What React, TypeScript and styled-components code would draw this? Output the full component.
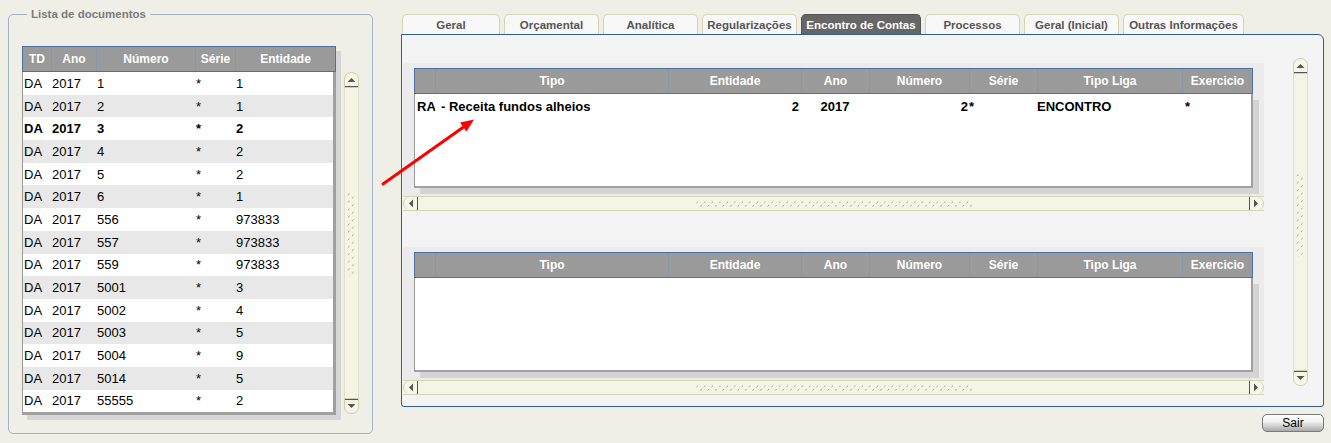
import React, { useId } from 'react';
import styled, { createGlobalStyle } from 'styled-components';

const Global = createGlobalStyle`
  html, body { margin: 0; padding: 0; background: #efefe8; }
  body { font-family: "Liberation Sans", Arial, sans-serif; }
  #root { width: 1331px; height: 443px; }
`;

const Page = styled.div`
  position: relative;
  display: flex;
  align-items: flex-start;
  width: 1331px;
  height: 443px;
  box-sizing: border-box;
  padding-left: 8px;
  overflow: hidden;
`;

/* ---------- left fieldset ---------- */
const Fieldset = styled.section`
  position: relative;
  flex: none;
  box-sizing: border-box;
  width: 365px;
  height: 420px;
  margin-top: 14px;
  border: 1px solid #a3b3c6;
  border-radius: 5px;
  padding: 31px 0 0 13px;
  display: flex;
  align-items: flex-start;
  gap: 8px;
`;

const Legend = styled.span`
  position: absolute;
  top: -8px;
  left: 18px;
  padding: 0 4px;
  background: #efefe8;
  color: #7c7c7c;
  font-size: 11.5px;
  font-weight: bold;
  line-height: 14px;
`;

/* ---------- grid ---------- */
const GridFrame = styled.div<{ $w: number; $shadow?: boolean }>`
  flex: none;
  width: ${p => p.$w}px;
  box-shadow: ${p => (p.$shadow ? '5px 5px 0 #d6d6d6' : 'none')};
`;

const HeaderRow = styled.div<{ $cols: string }>`
  display: grid;
  grid-template-columns: ${p => p.$cols};
  box-sizing: border-box;
  height: 26px;
  background: #9a9a9a;
  border: 1px solid #4d719e;
`;

const HeaderCell = styled.div`
  display: flex;
  align-items: center;
  justify-content: center;
  color: #ffffff;
  font-weight: bold;
  font-size: 12px;
  white-space: nowrap;
  overflow: hidden;
  border-left: 1px solid #8796ad;
  &:first-child { border-left: none; }
`;

const Body = styled.div<{ $h: number; $shadow?: boolean; $edge: number }>`
  box-sizing: border-box;
  height: ${p => p.$h}px;
  background: #ffffff;
  border-left: 1px solid #9a9a9a;
  border-right: ${p => p.$edge}px solid #a0a0a0;
  border-bottom: ${p => p.$edge}px solid #a0a0a0;
  box-shadow: ${p => (p.$shadow ? '6px 6px 0 #d4d4d4' : 'none')};
  overflow: hidden;
`;

const Row = styled.div<{ $cols: string; $h: number; $alt?: boolean; $bold?: boolean }>`
  display: grid;
  grid-template-columns: ${p => p.$cols};
  height: ${p => p.$h}px;
  align-items: center;
  background: ${p => (p.$alt ? '#e8e8e8' : 'transparent')};
  font-weight: ${p => (p.$bold ? 'bold' : 'normal')};
  font-size: 13px;
  color: #000;
`;

const Cell = styled.div<{ $align?: 'left' | 'right' | 'center'; $pad?: string }>`
  text-align: ${p => p.$align || 'left'};
  padding: ${p => p.$pad || '0 0 0 1px'};
  white-space: nowrap;
  overflow: hidden;
`;

/* ---------- scrollbars ---------- */
const VScroll = styled.div<{ $h: number; $mt: number; $ml: number }>`
  flex: none;
  width: 15px;
  height: ${p => p.$h}px;
  margin-top: ${p => p.$mt}px;
  margin-left: ${p => p.$ml}px;
  display: flex;
  flex-direction: column;
`;

const VBtn = styled.div<{ $up?: boolean }>`
  flex: none;
  height: 16px;
  box-sizing: border-box;
  border: 1px solid #cfd0a6;
  background: #f6f6e8;
  border-radius: ${p => (p.$up ? '7px 7px 0 0' : '0 0 7px 7px')};
  display: flex;
  align-items: center;
  justify-content: center;
`;

const VTrack = styled.div<{ $shift: number }>`
  flex: 1;
  background: #f5f5e6;
  border-left: 1px solid #e2e2cc;
  border-right: 1px solid #e2e2cc;
  display: flex;
  align-items: center;
  justify-content: center;
  padding-bottom: ${p => p.$shift}px;
`;

const HScroll = styled.div`
  display: flex;
  height: 15px;
  box-sizing: border-box;
  background: #f5f5e7;
  border-top: 1px solid #d4d5b2;
  border-bottom: 1px solid #d4d5b2;
`;

const HBtn = styled.div<{ $left?: boolean }>`
  flex: none;
  width: 15px;
  box-sizing: border-box;
  background: #f6f6e8;
  border-radius: ${p => (p.$left ? '7px 0 0 7px' : '0 7px 7px 0')};
  border-left: ${p => (p.$left ? '1px solid #cfd0a6' : 'none')};
  border-right: ${p => (p.$left ? 'none' : '1px solid #cfd0a6')};
  display: flex;
  align-items: center;
  justify-content: center;
`;

const HTrack = styled.div`
  flex: 1;
  display: flex;
  align-items: center;
  justify-content: center;
`;

const GripH = () => {
  const id = useId().replace(/:/g, '');
  return (
    <svg width="276" height="9" viewBox="0 0 276 9">
      <defs>
        <pattern id={id} width="7.5" height="9" patternUnits="userSpaceOnUse">
          <line x1="0.5" y1="4" x2="2" y2="2.5" stroke="#8f8f70" strokeWidth="0.9" />
          <line x1="4.2" y1="7.5" x2="5.7" y2="6" stroke="#8f8f70" strokeWidth="0.9" />
        </pattern>
      </defs>
      <rect width="276" height="9" fill={`url(#${id})`} />
    </svg>
  );
};

const GripV = () => {
  const id = useId().replace(/:/g, '');
  return (
    <svg width="9" height="84" viewBox="0 0 9 84">
      <defs>
        <pattern id={id} width="9" height="7.5" patternUnits="userSpaceOnUse">
          <line x1="1" y1="3" x2="2.5" y2="1.5" stroke="#8f8f70" strokeWidth="0.9" />
          <line x1="5" y1="6.5" x2="6.5" y2="5" stroke="#8f8f70" strokeWidth="0.9" />
        </pattern>
      </defs>
      <rect width="9" height="84" fill={`url(#${id})`} />
    </svg>
  );
};

const ArrowUp = () => (
  <svg width="13" height="14" viewBox="0 0 13 14">
    <polygon points="2.5,9 10.5,9 6.5,5" fill="#555" />
    <line x1="0" y1="13.5" x2="13" y2="13.5" stroke="#555" strokeWidth="1" />
  </svg>
);
const ArrowDown = () => (
  <svg width="13" height="14" viewBox="0 0 13 14">
    <line x1="0" y1="0.5" x2="13" y2="0.5" stroke="#555" strokeWidth="1" />
    <polygon points="2.5,5 10.5,5 6.5,9" fill="#555" />
  </svg>
);
const ArrowLeft = () => (
  <svg width="14" height="13" viewBox="0 0 14 13">
    <polygon points="9,2.5 9,10.5 5,6.5" fill="#555" />
    <line x1="13.5" y1="0" x2="13.5" y2="13" stroke="#555" strokeWidth="1" />
  </svg>
);
const ArrowRight = () => (
  <svg width="14" height="13" viewBox="0 0 14 13">
    <line x1="0.5" y1="0" x2="0.5" y2="13" stroke="#555" strokeWidth="1" />
    <polygon points="5,2.5 5,10.5 9,6.5" fill="#555" />
  </svg>
);

const VerticalScrollbar = ({ h, mt, ml, shift }: { h: number; mt: number; ml: number; shift: number }) => (
  <VScroll $h={h} $mt={mt} $ml={ml}>
    <VBtn $up><ArrowUp /></VBtn>
    <VTrack $shift={shift}><GripV /></VTrack>
    <VBtn><ArrowDown /></VBtn>
  </VScroll>
);

const HorizontalScrollbar = () => (
  <HScroll>
    <HBtn $left><ArrowLeft /></HBtn>
    <HTrack><GripH /></HTrack>
    <HBtn><ArrowRight /></HBtn>
  </HScroll>
);

/* ---------- right side ---------- */
const RightCol = styled.div`
  flex: none;
  width: 923px;
  margin-left: 28px;
  margin-top: 14px;
  display: flex;
  flex-direction: column;
`;

const TabsRow = styled.div`
  display: flex;
  gap: 4px;
  height: 20px;
  padding-left: 1px;
`;

const Tab = styled.div<{ $w: number; $active?: boolean }>`
  flex: none;
  width: ${p => p.$w}px;
  box-sizing: border-box;
  height: 20px;
  border: 1px solid ${p => (p.$active ? '#555555' : '#d5d6b0')};
  border-bottom: none;
  border-radius: 5px 5px 0 0;
  background: ${p => (p.$active ? '#666666' : '#f8f8f8')};
  color: ${p => (p.$active ? '#ffffff' : '#555555')};
  font-size: 11.5px;
  font-weight: bold;
  line-height: 20px;
  text-align: center;
  white-space: nowrap;
`;

const Panel = styled.div`
  box-sizing: border-box;
  height: 373px;
  border: 1px solid #2e5f8e;
  border-radius: 0 6px 3px 3px;
  background: #f4f4f4;
  display: flex;
  align-items: flex-start;
  padding: 23px 15px 0 1px;
`;

const PanelMain = styled.div`
  flex: none;
  width: 861px;
  padding-top: 5px;
  display: flex;
  flex-direction: column;
  gap: 36px;
`;

const GridArea = styled.div`
  background: #ebebeb;
  padding-top: 5px;
  display: flex;
  flex-direction: column;
`;

const GridInset = styled.div`
  margin: 0 0 8px 11px;
`;

const Footer = styled.div`
  display: flex;
  justify-content: flex-end;
  margin-top: 7px;
`;

const SairButton = styled.button`
  width: 62px;
  height: 18px;
  box-sizing: border-box;
  padding: 0;
  border: 1px solid #7a7a7a;
  border-radius: 5px;
  background: linear-gradient(#ffffff 0%, #f2f2f2 40%, #a9a9a9 100%);
  font-family: "Liberation Sans", Arial, sans-serif;
  font-size: 12px;
  color: #000;
  line-height: 16px;
`;

const Pointer = styled.svg`
  position: absolute;
  left: 0;
  top: 0;
  pointer-events: none;
`;

/* ---------- data ---------- */
const leftCols = '28px 45px 99px 40px 1fr';
const leftHeaders = ['TD', 'Ano', 'Número', 'Série', 'Entidade'];
const leftRows: [string, string, string, string, string][] = [
  ['DA', '2017', '1', '*', '1'],
  ['DA', '2017', '2', '*', '1'],
  ['DA', '2017', '3', '*', '2'],
  ['DA', '2017', '4', '*', '2'],
  ['DA', '2017', '5', '*', '2'],
  ['DA', '2017', '6', '*', '1'],
  ['DA', '2017', '556', '*', '973833'],
  ['DA', '2017', '557', '*', '973833'],
  ['DA', '2017', '559', '*', '973833'],
  ['DA', '2017', '5001', '*', '3'],
  ['DA', '2017', '5002', '*', '4'],
  ['DA', '2017', '5003', '*', '5'],
  ['DA', '2017', '5004', '*', '9'],
  ['DA', '2017', '5014', '*', '5'],
  ['DA', '2017', '55555', '*', '2'],
];

const rightCols = '20px 233px 133px 68px 100px 68px 145px 1fr';
const rightHeaders = ['', 'Tipo', 'Entidade', 'Ano', 'Número', 'Série', 'Tipo Liga', 'Exercicio'];
const rightCells: { t: string; a: 'left' | 'right' | 'center'; p: string }[] = [
  { t: 'RA', a: 'left', p: '0 0 0 2px' },
  { t: '- Receita fundos alheios', a: 'left', p: '0 0 0 6px' },
  { t: '2', a: 'right', p: '0 2px 0 0' },
  { t: '2017', a: 'center', p: '0' },
  { t: '2', a: 'right', p: '0 1px 0 0' },
  { t: '*', a: 'left', p: '0' },
  { t: 'ENCONTRO', a: 'left', p: '0' },
  { t: '*', a: 'left', p: '0 0 0 3px' },
];

const tabs = [
  { label: 'Geral', w: 98 },
  { label: 'Orçamental', w: 95 },
  { label: 'Analítica', w: 95 },
  { label: 'Regularizações', w: 95 },
  { label: 'Encontro de Contas', w: 120, active: true },
  { label: 'Processos', w: 95 },
  { label: 'Geral (Inicial)', w: 95 },
  { label: 'Outras Informações', w: 121 },
];

const RightGrid = ({ withRow }: { withRow?: boolean }) => (
  <GridArea>
    <GridInset>
      <GridFrame $w={839}>
        <HeaderRow $cols={rightCols}>
          {rightHeaders.map((h, i) => (
            <HeaderCell key={i}>{h}</HeaderCell>
          ))}
        </HeaderRow>
        <Body $h={94} $shadow $edge={2}>
          {withRow && (
            <Row $cols={rightCols} $h={25} $bold>
              {rightCells.map((c, i) => (
                <Cell key={i} $align={c.a} $pad={c.p}>{c.t}</Cell>
              ))}
            </Row>
          )}
        </Body>
      </GridFrame>
    </GridInset>
    <HorizontalScrollbar />
  </GridArea>
);

export default function App() {
  return (
    <>
      <Global />
      <Page>
        <Fieldset>
          <Legend>Lista de documentos</Legend>
          <GridFrame $w={314} $shadow>
            <HeaderRow $cols={leftCols}>
              {leftHeaders.map(h => (
                <HeaderCell key={h}>{h}</HeaderCell>
              ))}
            </HeaderRow>
            <Body $h={343} $edge={3}>
              {leftRows.map((r, i) => (
                <Row key={i} $cols={leftCols} $h={22.7} $alt={i % 2 === 1} $bold={i === 2}>
                  {r.map((c, j) => (
                    <Cell key={j}>{c}</Cell>
                  ))}
                </Row>
              ))}
            </Body>
          </GridFrame>
          <VerticalScrollbar h={342} mt={26} ml={0} shift={18} />
        </Fieldset>

        <RightCol>
          <TabsRow>
            {tabs.map(t => (
              <Tab key={t.label} $w={t.w} $active={t.active}>{t.label}</Tab>
            ))}
          </TabsRow>
          <Panel>
            <PanelMain>
              <RightGrid withRow />
              <RightGrid />
            </PanelMain>
            <VerticalScrollbar h={328} mt={0} ml={29} shift={14} />
          </Panel>
          <Footer>
            <SairButton>Sair</SairButton>
          </Footer>
        </RightCol>

        <Pointer width="1331" height="443" viewBox="0 0 1331 443">
          <line x1="383" y1="184" x2="465" y2="126" stroke="#ff0000" strokeWidth="3" strokeLinecap="round" />
          <polygon points="474,119.5 460,122.5 466.5,131.5" fill="#ff0000" />
        </Pointer>
      </Page>
    </>
  );
}
